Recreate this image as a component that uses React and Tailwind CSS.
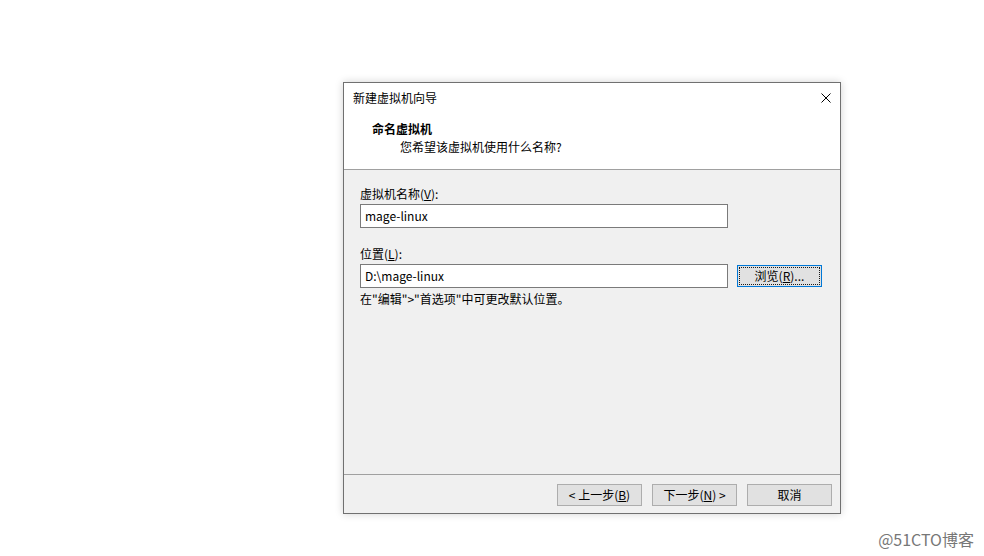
import React from "react";

const font = { fontFamily: '"Noto Sans CJK SC", "Liberation Sans", sans-serif' };

function WinButton({ children, focused }) {
  return (
    <button
      className={
        "w-[85px] h-[22px] bg-[#e1e1e1] text-[12px] leading-[20px] text-black flex items-center justify-center " +
        (focused ? "border border-[#0078d7] p-[1px]" : "border border-[#adadad]")
      }
    >
      {focused ? (
        <span className="w-full h-full border border-dotted border-[#1a1a1a] flex items-center justify-center">
          {children}
        </span>
      ) : (
        children
      )}
    </button>
  );
}

export default function App() {
  return (
    <div className="w-[984px] h-[556px] bg-white overflow-hidden text-black" style={font}>
      <div className="pt-[82px] pl-[343px]">
        {/* 对话框 */}
        <div className="w-[498px] h-[432px] border border-[#707070] bg-[#f0f0f0] flex flex-col shadow-[0_0_8px_rgba(0,0,0,0.18)]">
          {/* 标题栏 + 页眉 */}
          <div className="bg-white border-b border-[#a0a0a0]">
            <div className="h-[29px] flex items-center justify-between pl-[9px] pr-[9px]">
              <span className="text-[12px]">新建虚拟机向导</span>
              <svg width="10" height="10" viewBox="0 0 10 10">
                <path d="M0.5 0.5 L9.5 9.5 M9.5 0.5 L0.5 9.5" stroke="#000" strokeWidth="1" fill="none" />
              </svg>
            </div>
            <div className="pl-[28px] pt-[8px] pb-[13px]">
              <div className="text-[12px] leading-[18px] font-bold">命名虚拟机</div>
              <div className="text-[12px] leading-[18px] pl-[28px]">您希望该虚拟机使用什么名称?</div>
            </div>
          </div>

          {/* 内容 */}
          <div className="flex-1 pl-[16px] pt-[15px] text-[12px]">
            <div className="leading-[18px]">
              虚拟机名称(<span className="underline">V</span>):
            </div>
            <div className="mt-[1px] w-[368px] h-[24px] bg-white border border-[#7a7a7a] flex items-center pl-[4px] leading-[18px]">
              mage-linux
            </div>

            <div className="mt-[17px] leading-[18px]">
              位置(<span className="underline">L</span>):
            </div>
            <div className="mt-[1px] flex items-center gap-[9px]">
              <div className="w-[368px] h-[24px] bg-white border border-[#7a7a7a] flex items-center pl-[4px] leading-[18px]">
                D:\mage-linux
              </div>
              <WinButton focused>
                浏览(<span className="underline">R</span>)...
              </WinButton>
            </div>
            <div className="mt-[2px] leading-[18px]">在"编辑">"首选项"中可更改默认位置。</div>
          </div>

          {/* 底部按钮 */}
          <div className="border-t border-[#a0a0a0] pt-[9px] pb-[7px] pr-[8px] flex justify-end gap-[10px]">
            <WinButton>
              &lt; 上一步(<span className="underline">B</span>)
            </WinButton>
            <WinButton>
              下一步(<span className="underline">N</span>) &gt;
            </WinButton>
            <WinButton>取消</WinButton>
          </div>
        </div>
      </div>

      <div className="flex justify-end pr-[10px] mt-[16px]">
        <span className="text-[16px] leading-[18px] text-[#777]">@51CTO博客</span>
      </div>
    </div>
  );
}
